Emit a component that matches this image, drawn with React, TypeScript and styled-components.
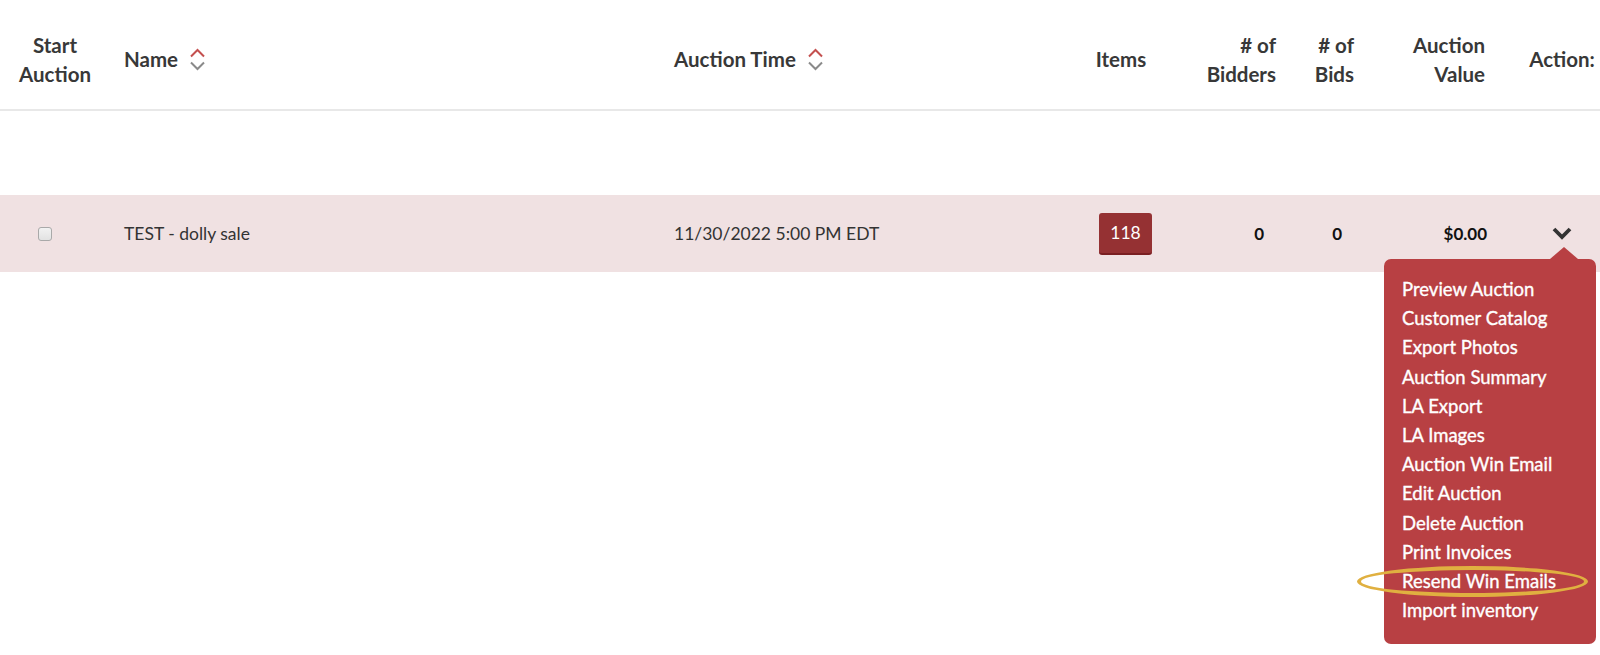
import styled, { createGlobalStyle } from "styled-components";

const GlobalStyle = createGlobalStyle`
  html, body {
    margin: 0;
    padding: 0;
    background: #fff;
    font-family: Lato, "Liberation Sans", sans-serif;
    color: #333;
  }
`;

const cols = "110px 550px 420px 82px 128px 78px 156px 76px";

const menuItems = [
  "Preview Auction",
  "Customer Catalog",
  "Export Photos",
  "Auction Summary",
  "LA Export",
  "LA Images",
  "Auction Win Email",
  "Edit Auction",
  "Delete Auction",
  "Print Invoices",
  "Resend Win Emails",
  "Import inventory",
];

const Page = styled.div`
  width: 1600px;
  height: 655px;
  overflow: hidden;
`;

const HeaderRow = styled.div`
  display: grid;
  grid-template-columns: ${cols};
  height: 111px;
  box-sizing: border-box;
  padding-top: 10px;
  border-bottom: 2px solid #e8e8e8;
`;

const HeadCell = styled.div<{ $align?: "left" | "center" | "right"; $pad?: number }>`
  display: flex;
  align-items: center;
  justify-content: ${(p) =>
    p.$align === "center" ? "center" : p.$align === "right" ? "flex-end" : "flex-start"};
  text-align: ${(p) => p.$align || "left"};
  padding: 0 ${(p) => p.$pad ?? 14}px;
  font-size: 20.5px;
  font-weight: 700;
  line-height: 28.5px;
  color: #383838;
  gap: 11px;
`;

const Spacer = styled.div`
  height: 84px;
`;

const DataRow = styled.div`
  display: grid;
  grid-template-columns: ${cols};
  height: 77px;
  background: #f0e1e2;
`;

const Cell = styled.div<{ $align?: "left" | "center" | "right"; $pad?: number; $bold?: boolean }>`
  display: flex;
  align-items: center;
  justify-content: ${(p) =>
    p.$align === "center" ? "center" : p.$align === "right" ? "flex-end" : "flex-start"};
  padding: 0 ${(p) => p.$pad ?? 14}px;
  font-size: ${(p) => (p.$bold ? 17 : 17.5)}px;
  font-weight: ${(p) => (p.$bold ? 700 : 400)};
  color: ${(p) => (p.$bold ? "#111" : "#333")};
  position: relative;
`;

const Checkbox = styled.span`
  width: 12px;
  height: 12px;
  margin-left: 38px;
  border: 1px solid #a9a9a9;
  border-radius: 3px;
  background: linear-gradient(#f2f2f2, #e2e2e2);
`;

const Badge = styled.span`
  display: inline-flex;
  align-items: center;
  justify-content: center;
  width: 53px;
  height: 42px;
  margin-left: 9px;
  border-radius: 3px;
  background: #953133;
  border-bottom: 2px solid #7a1f22;
  box-sizing: border-box;
  color: #fff;
  font-size: 17.5px;
`;

const Menu = styled.div`
  position: absolute;
  top: 64px;
  right: 4px;
  width: 212px;
  box-sizing: border-box;
  padding: 16px 0 19px 18px;
  background: #b84043;
  border-radius: 7px;
  z-index: 2;

  &::before {
    content: "";
    position: absolute;
    top: -12px;
    left: 166px;
    border-left: 14px solid transparent;
    border-right: 14px solid transparent;
    border-bottom: 12px solid #b84043;
  }
`;

const MenuItem = styled.div`
  position: relative;
  color: #fff;
  font-size: 18.5px;
  line-height: 29.2px;
  white-space: nowrap;
  -webkit-text-stroke: 0.35px #fff;
`;

const Highlight = styled.span`
  position: absolute;
  left: -45px;
  top: -1px;
  width: 231px;
  height: 31px;
  border: 4px solid #e0b040;
  border-radius: 50%;
  box-sizing: border-box;
  pointer-events: none;
`;

const SortIcon = () => (
  <svg width="17" height="25" viewBox="0 0 17 25" fill="none">
    <path d="M2 9.5 L8.5 3 L15 9.5" stroke="#c4504f" strokeWidth="2" />
    <path d="M2 15.5 L8.5 22 L15 15.5" stroke="#8a8a8a" strokeWidth="2" />
  </svg>
);

const ChevronDown = () => (
  <svg width="20" height="13" viewBox="0 0 20 13" fill="none">
    <path d="M2 2 L10 10 L18 2" stroke="#333" strokeWidth="3.8" />
  </svg>
);

export default function App() {
  return (
    <Page>
      <GlobalStyle />
      <HeaderRow>
        <HeadCell $align="center" $pad={0}>
          Start
          <br />
          Auction
        </HeadCell>
        <HeadCell>
          Name <SortIcon />
        </HeadCell>
        <HeadCell>
          Auction Time <SortIcon />
        </HeadCell>
        <HeadCell $align="center" $pad={0}>
          Items
        </HeadCell>
        <HeadCell $align="right">
          # of
          <br />
          Bidders
        </HeadCell>
        <HeadCell $align="right">
          # of
          <br />
          Bids
        </HeadCell>
        <HeadCell $align="right" $pad={39}>
          Auction
          <br />
          Value
        </HeadCell>
        <HeadCell $align="center" $pad={0}>
          Action:
        </HeadCell>
      </HeaderRow>
      <Spacer />
      <DataRow>
        <Cell $pad={0}>
          <Checkbox />
        </Cell>
        <Cell>TEST - dolly sale</Cell>
        <Cell>11/30/2022 5:00 PM EDT</Cell>
        <Cell $align="center" $pad={0}>
          <Badge>118</Badge>
        </Cell>
        <Cell $align="right" $pad={26} $bold>
          0
        </Cell>
        <Cell $align="right" $pad={26} $bold>
          0
        </Cell>
        <Cell $align="right" $pad={37} $bold>
          $0.00
        </Cell>
        <Cell $align="center" $pad={0}>
          <ChevronDown />
          <Menu>
            {menuItems.map((item) => (
              <MenuItem key={item}>
                {item}
                {item === "Resend Win Emails" && <Highlight />}
              </MenuItem>
            ))}
          </Menu>
        </Cell>
      </DataRow>
    </Page>
  );
}
